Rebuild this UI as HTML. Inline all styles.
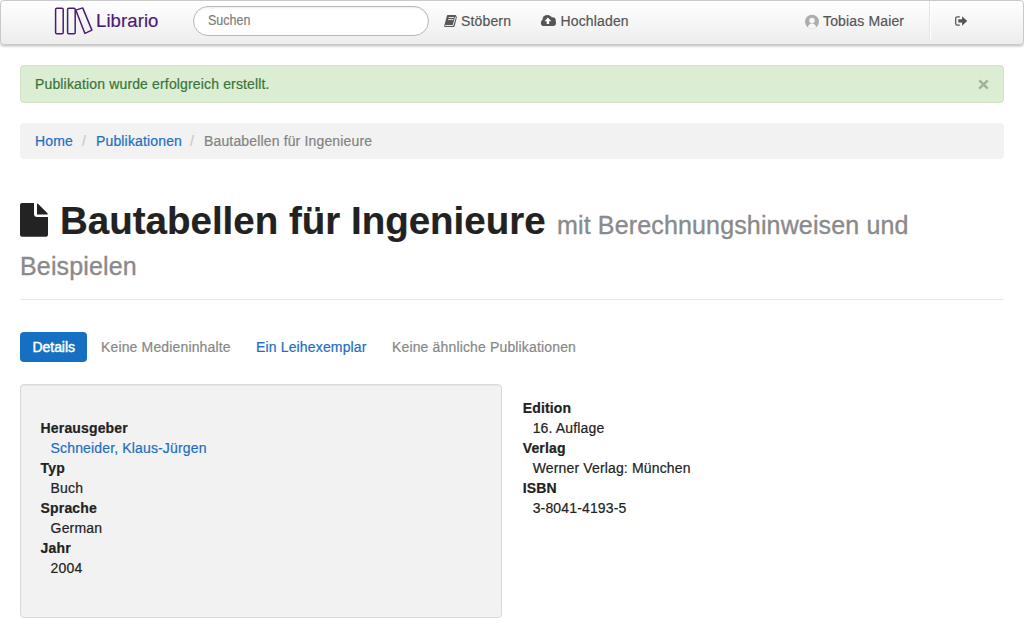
<!DOCTYPE html>
<html>
<head>
<meta charset="utf-8">
<style>
*{box-sizing:border-box;}
html,body{margin:0;padding:0;}
body{width:1024px;height:626px;overflow:hidden;background:#fff;font-family:"Liberation Sans",sans-serif;font-size:14px;line-height:20px;color:#333;position:relative;letter-spacing:0.15px;-webkit-text-stroke:0.2px currentColor;}
a{color:#1c6ec4;text-decoration:none;}
.abs{position:absolute;}

/* navbar */
.navbar{position:absolute;left:0;top:0;width:1024px;height:45px;border:1px solid #c9c9c9;border-radius:4px;
  background:linear-gradient(to bottom,#ffffff 0%,#ededed 100%);box-shadow:0 1px 3px rgba(0,0,0,0.3);}
.brand{position:absolute;left:96px;top:11px;font-size:18.5px;line-height:20px;color:#4b1c73;letter-spacing:0.1px;}
.logo{position:absolute;left:50px;top:4px;}
.search{position:absolute;left:193px;top:6px;width:236px;height:30px;border:1px solid #b9b9b9;border-radius:15px;background:#fff;
  box-shadow:inset 0 1px 2px rgba(0,0,0,0.08);}
.search span{position:absolute;left:14px;top:3px;font-size:14px;line-height:20px;color:#7d7d7d;letter-spacing:0;transform:scaleX(0.895);transform-origin:0 0;}
.nl{position:absolute;top:11px;font-size:14px;line-height:20px;color:#555;white-space:nowrap;}
.divider{position:absolute;left:929px;top:1px;width:2px;height:40px;border-left:1px solid #e4e4e4;border-right:1px solid #ffffff;}

/* alert */
.alert{position:absolute;left:20px;top:65px;width:984px;height:38px;background:#dbedd3;border:1px solid #cfe6c2;border-radius:4px;}
.alert span{position:absolute;left:14px;top:8px;color:#3a7438;}
.close{position:absolute;right:14px;top:12px;}

/* breadcrumb */
.bc{position:absolute;left:20px;top:123px;width:984px;height:36px;background:#f2f2f2;border-radius:4px;}
.bc .t{position:absolute;top:8px;white-space:nowrap;}
.bc .d{color:#c8c8c8;}
.bc .act{color:#838383;}

/* header */
.h1{position:absolute;left:60px;top:201px;letter-spacing:0;font-weight:bold;font-size:38.5px;line-height:40px;color:#222;white-space:nowrap;}
.sm{position:absolute;font-size:25px;line-height:30px;color:#8a8a8a;-webkit-text-stroke:0.35px #8a8a8a;white-space:nowrap;}
.hr{position:absolute;left:20px;top:299px;width:984px;height:1px;background:#e8e8e8;}

/* pills */
.pill{position:absolute;left:20px;top:332px;width:67px;height:30px;border-radius:4px;background:#1570c3;}
.pt{position:absolute;top:340px;line-height:14px;white-space:nowrap;}
.muted{color:#878787;}

/* well */
.well{position:absolute;left:20px;top:384px;width:482px;height:234px;background:#f2f2f2;border:1px solid #d9d9d9;border-radius:4px;
  box-shadow:inset 0 1px 1px rgba(0,0,0,0.05), 0 0 0 0 transparent;}
.dt{position:absolute;font-weight:bold;color:#222;white-space:nowrap;}
.dd{position:absolute;color:#222;white-space:nowrap;}
a.dd{color:#1c6ec4;}
</style>
</head>
<body>

<div class="navbar">
</div>
<svg class="logo" width="46" height="34" viewBox="50 4 46 34">
  <g fill="none" stroke="#4b1c73" stroke-width="1.5" stroke-linejoin="round">
    <rect x="55.6" y="8.2" width="7.6" height="25.6" rx="1.3"/>
    <rect x="67.6" y="8.2" width="7.6" height="25.6" rx="1.3"/>
    <path d="M75.8 10.1 L82.7 7.9 L91.9 30.1 L84.9 33.4 Z"/>
  </g>
</svg>
<div class="brand">Librario</div>
<div class="search"><span>Suchen</span></div>

<!-- Stöbern -->
<svg class="abs" style="left:440px;top:8px" width="25" height="24" viewBox="440 8 25 24">
  <path d="M447.8 15 H455.2 Q456.1 15 456.4 15.9 L456.8 17.4 L454.6 26.2 Q454.4 27 453.6 27 H445 Q443.9 27 444.2 25.9 L446.9 15.8 Q447.1 15 447.8 15 Z" fill="#585858"/>
  <path d="M445.2 25.5 H453.1 L455.5 16.9" fill="none" stroke="#f8f8f8" stroke-width="0.9"/>
  <path d="M448.6 17.5 H454 M448.1 19.6 H453.4" stroke="#f8f8f8" stroke-width="0.85"/>
</svg>
<div class="nl" style="left:461px">Stöbern</div>

<!-- Hochladen -->
<svg class="abs" style="left:536px;top:8px" width="25" height="24" viewBox="536 8 25 24">
  <g fill="#555">
    <circle cx="547.3" cy="19.7" r="4.8"/>
    <circle cx="552.4" cy="20.6" r="3.3"/>
    <circle cx="544" cy="22.9" r="3.1"/>
    <circle cx="553" cy="23" r="3"/>
    <rect x="544" y="20.5" width="9" height="5.5"/>
  </g>
  <path d="M547.9 17.6 L551.3 21.2 H549.1 V24 H546.7 V21.2 H544.5 Z" fill="#fff"/>
</svg>
<div class="nl" style="left:560.5px">Hochladen</div>

<!-- user -->
<svg class="abs" style="left:800px;top:8px" width="25" height="24" viewBox="800 8 25 24">
  <defs><clipPath id="uc"><circle cx="812" cy="21.7" r="7"/></clipPath></defs>
  <circle cx="812" cy="21.7" r="7" fill="#adadad"/>
  <g clip-path="url(#uc)" fill="#f6f6f6">
    <circle cx="812" cy="20.5" r="2.75"/>
    <path d="M807.4 29.5 Q807.8 23.4 812 23.4 Q816.2 23.4 816.6 29.5 Z"/>
  </g>
</svg>
<div class="nl" style="left:823px">Tobias Maier</div>
<div class="divider"></div>

<!-- logout -->
<svg class="abs" style="left:950px;top:10px" width="22" height="22" viewBox="950 10 22 22">
  <path d="M959.8 16.75 H957.3 Q955.7 16.75 955.7 18.35 V23.45 Q955.7 25.05 957.3 25.05 H959.8" fill="none" stroke="#555" stroke-width="1.25"/>
  <path d="M958.3 19.3 H962.1 V16.15 L967.2 20.9 L962.1 25.65 V22.6 H958.3 Z" fill="#555"/>
</svg>

<div class="alert"><span>Publikation wurde erfolgreich erstellt.</span>
</div>
<svg class="abs" style="left:977.6px;top:79.4px" width="11" height="11" viewBox="0 0 11 11">
  <path d="M1.3 1.3 L9.7 9.7 M9.7 1.3 L1.3 9.7" stroke="#9fb39a" stroke-width="2.4"/>
</svg>

<div class="bc">
  <a class="t" style="left:15px">Home</a>
  <span class="t d" style="left:62px">/</span>
  <a class="t" style="left:76px">Publikationen</a>
  <span class="t d" style="left:170px">/</span>
  <span class="t act" style="left:184px">Bautabellen für Ingenieure</span>
</div>

<!-- header -->
<svg class="abs" style="left:20px;top:203px" width="28" height="34" viewBox="0 0 28 34">
  <path d="M2 0 H14 V10.8 Q14 14.1 17.3 14.1 H28 V31.7 Q28 33.7 26 33.7 H2 Q0 33.7 0 31.7 V2 Q0 0 2 0 Z" fill="#232323"/>
  <path d="M17 0.4 Q17.6 0.4 18.2 1 L27 9.8 Q27.8 10.6 27.8 11.4 H17 Z" fill="#232323"/>
</svg>
<div class="h1">Bautabellen für Ingenieure</div>
<div class="sm" style="left:557px;top:210px">mit Berechnungshinweisen und</div>
<div class="sm" style="left:20px;top:250.5px">Beispielen</div>
<div class="hr"></div>

<div class="pill"></div>
<div class="pt" style="left:32.5px;color:#fff;-webkit-text-stroke:0.45px #fff;letter-spacing:-0.05px">Details</div>
<div class="pt muted" style="left:101px">Keine Medieninhalte</div>
<a class="pt" style="left:256px">Ein Leihexemplar</a>
<div class="pt muted" style="left:392px">Keine ähnliche Publikationen</div>

<div class="well"></div>
<div class="dt" style="left:40.6px;top:418px">Herausgeber</div>
<a class="dd" style="left:50.6px;top:438px">Schneider, Klaus-Jürgen</a>
<div class="dt" style="left:40.6px;top:458px">Typ</div>
<div class="dd" style="left:50.6px;top:478px">Buch</div>
<div class="dt" style="left:40.6px;top:498px">Sprache</div>
<div class="dd" style="left:50.6px;top:518px">German</div>
<div class="dt" style="left:40.6px;top:538px">Jahr</div>
<div class="dd" style="left:50.6px;top:558px">2004</div>

<div class="dt" style="left:522.7px;top:398px">Edition</div>
<div class="dd" style="left:532.7px;top:418px">16. Auflage</div>
<div class="dt" style="left:522.7px;top:438px">Verlag</div>
<div class="dd" style="left:532.7px;top:458px">Werner Verlag: München</div>
<div class="dt" style="left:522.7px;top:478px">ISBN</div>
<div class="dd" style="left:532.7px;top:498px">3-8041-4193-5</div>

</body>
</html>
